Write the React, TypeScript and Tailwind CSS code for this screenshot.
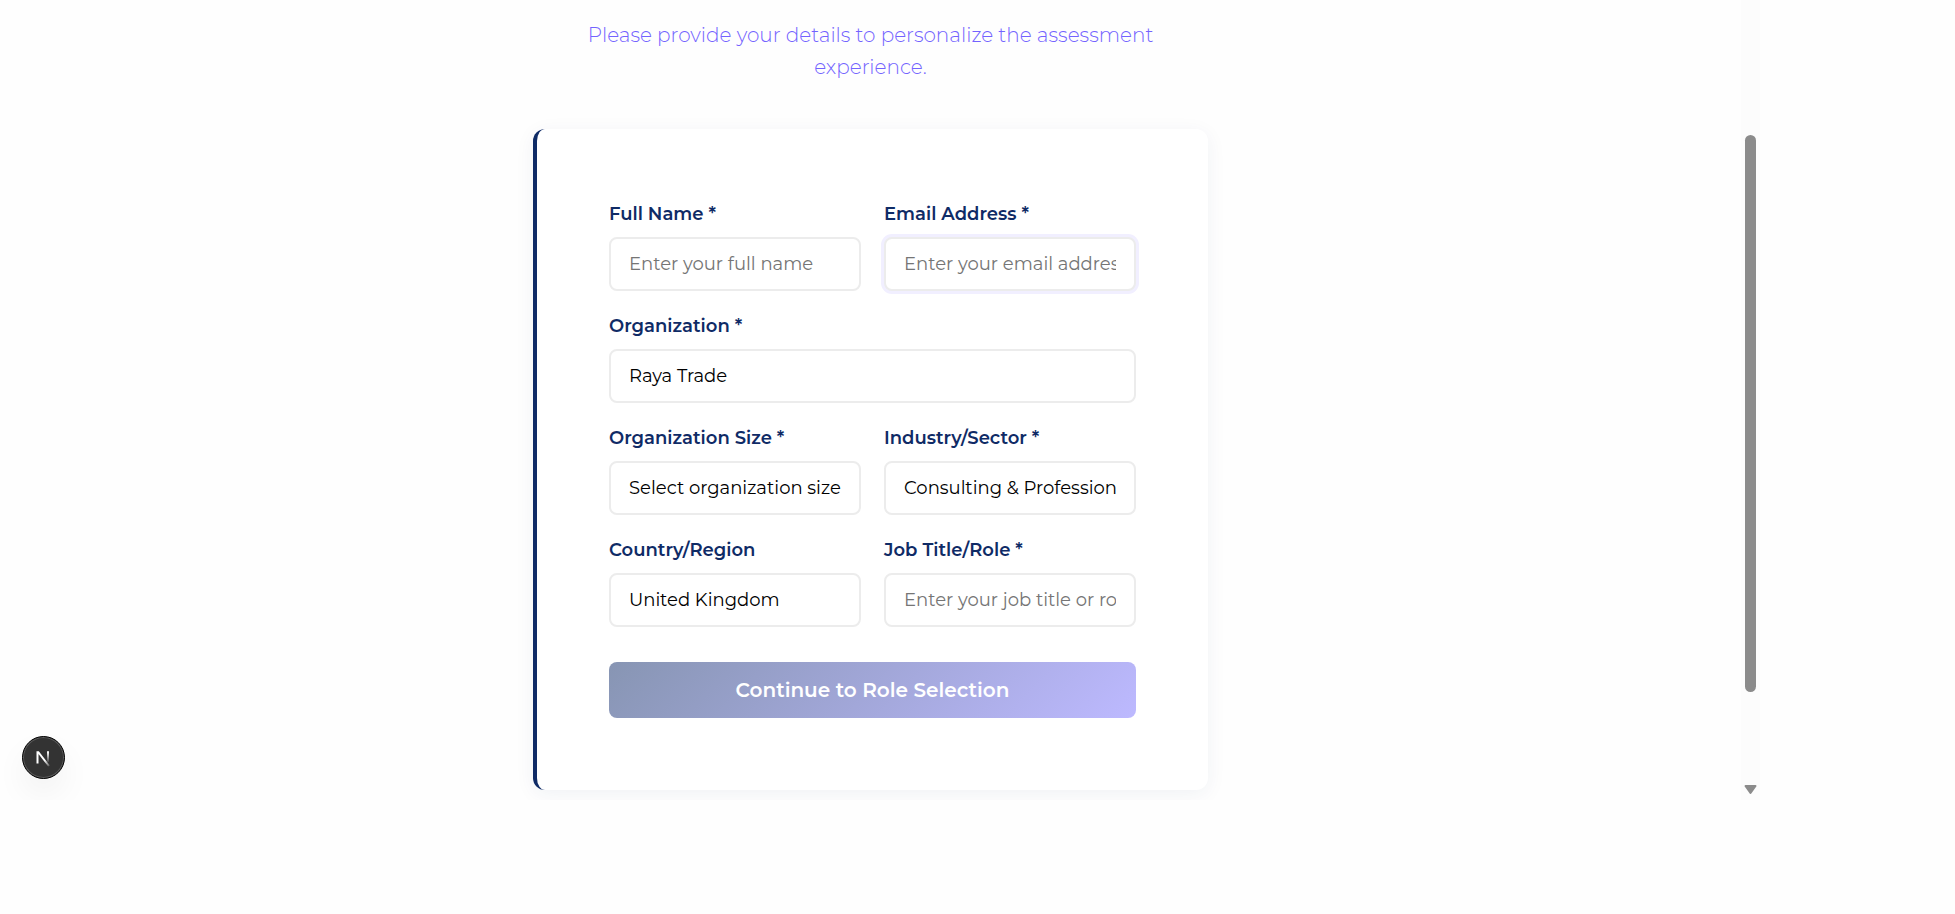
import React from "react";

const control =
  "block h-[54px] w-full min-w-0 appearance-none rounded-lg border-2 border-[#ececec] bg-white px-[18px] text-lg text-black placeholder:text-[#757575] placeholder:opacity-100 outline-none";

function Field({ id, label, wide = false, children }: { id: string; label: string; wide?: boolean; children: React.ReactNode }) {
  return (
    <div className={wide ? "col-span-2 min-w-0" : "min-w-0"}>
      <label htmlFor={id} className="mb-[9px] block text-lg leading-[27px] font-semibold text-[#0f2b66]">
        {label}
      </label>
      {children}
    </div>
  );
}

function DevBadge() {
  return (
    <button
      type="button"
      aria-label="Open developer tools"
      className="absolute bottom-[21px] left-[22px] flex size-[43px] items-center justify-center rounded-full border border-black bg-[#333] shadow-[inset_0_0_0_1px_rgba(255,255,255,0.2),0_16px_32px_0_rgba(0,0,0,0.05)]"
    >
      <svg width="16" height="18" viewBox="0 0 16 18" fill="none" aria-hidden="true">
        <defs>
          <linearGradient id="diag" x1="9" y1="11" x2="14.500" y2="18.500" gradientUnits="userSpaceOnUse">
            <stop stopColor="#fff" />
            <stop offset="1" stopColor="#fff" stopOpacity="0" />
          </linearGradient>
          <linearGradient id="stem" x1="12" y1="3" x2="12" y2="14" gradientUnits="userSpaceOnUse">
            <stop stopColor="#fff" />
            <stop offset="1" stopColor="#fff" stopOpacity="0" />
          </linearGradient>
        </defs>
        <path d="M0.500 2.200H2.800L13.800 16.500L12.200 17.600L2.500 5V14.500H0.500Z" fill="url(#diag)" />
        <path d="M12 2.200V13" stroke="url(#stem)" strokeWidth="2" />
      </svg>
    </button>
  );
}

export default function App() {
  return (
    <div className="min-h-screen bg-[#fefefe] font-['Montserrat','Inter',sans-serif]">
      <div className="relative mr-[195px] flex h-[800px] overflow-hidden">
        <main className="flex flex-1 flex-col items-center">
          <header className="-mt-[31px] w-full max-w-[675px] px-8 text-center">
            <h1 className="mb-[14px] text-4xl leading-9 font-bold text-[#0f2b66]">Your Information</h1>
            <p className="text-xl leading-8 font-light text-[#7363ff]">
              Please provide your details to personalize the assessment
              <br />
              experience.
            </p>
          </header>
          <form className="mt-[46px] w-full max-w-[675px] rounded-xl border-l-4 border-[#0f2b66] bg-white p-[72px] shadow-[0_4px_20px_rgba(15,43,102,0.06)]">
            <div className="grid grid-cols-2 gap-x-[23px] gap-y-[22px]">
              <Field id="name" label="Full Name *">
                <input id="name" type="text" placeholder="Enter your full name" className={control} />
              </Field>
              <Field id="email" label="Email Address *">
                <input id="email" type="email" placeholder="Enter your email address" className={control + " shadow-[0_0_0_3px_#f1efff]"} />
              </Field>
              <Field id="org" label="Organization *" wide>
                <input id="org" type="text" defaultValue="Raya Trade" className={control} />
              </Field>
              <Field id="size" label="Organization Size *">
                <select id="size" className={control}>
                  <option>Select organization size</option>
                </select>
              </Field>
              <Field id="industry" label="Industry/Sector *">
                <select id="industry" className={control}>
                  <option>Consulting &amp; Professional Services</option>
                </select>
              </Field>
              <Field id="country" label="Country/Region">
                <select id="country" className={control}>
                  <option>United Kingdom</option>
                </select>
              </Field>
              <Field id="job" label="Job Title/Role *">
                <input id="job" type="text" placeholder="Enter your job title or role" className={control} />
              </Field>
            </div>
            <button
              type="submit"
              className="mt-[35px] block h-14 w-full rounded-lg bg-[linear-gradient(135deg,#8795b3,#bdb9ff)] text-xl font-semibold text-white"
            >
              Continue to Role Selection
            </button>
          </form>
        </main>
        <div aria-hidden="true" className="flex w-[19px] flex-col items-center bg-[#fcfcfc] pt-[135px]">
          <div className="h-[557px] w-[11px] rounded-full bg-[#8b8b8b]" />
          <svg className="mt-[92px]" width="13" height="11" viewBox="0 0 13 11">
            <path d="M1.500 2h10L6.500 9z" fill="#8b8b8b" stroke="#8b8b8b" strokeWidth="2" strokeLinejoin="round" />
          </svg>
        </div>
        <DevBadge />
      </div>
    </div>
  );
}
